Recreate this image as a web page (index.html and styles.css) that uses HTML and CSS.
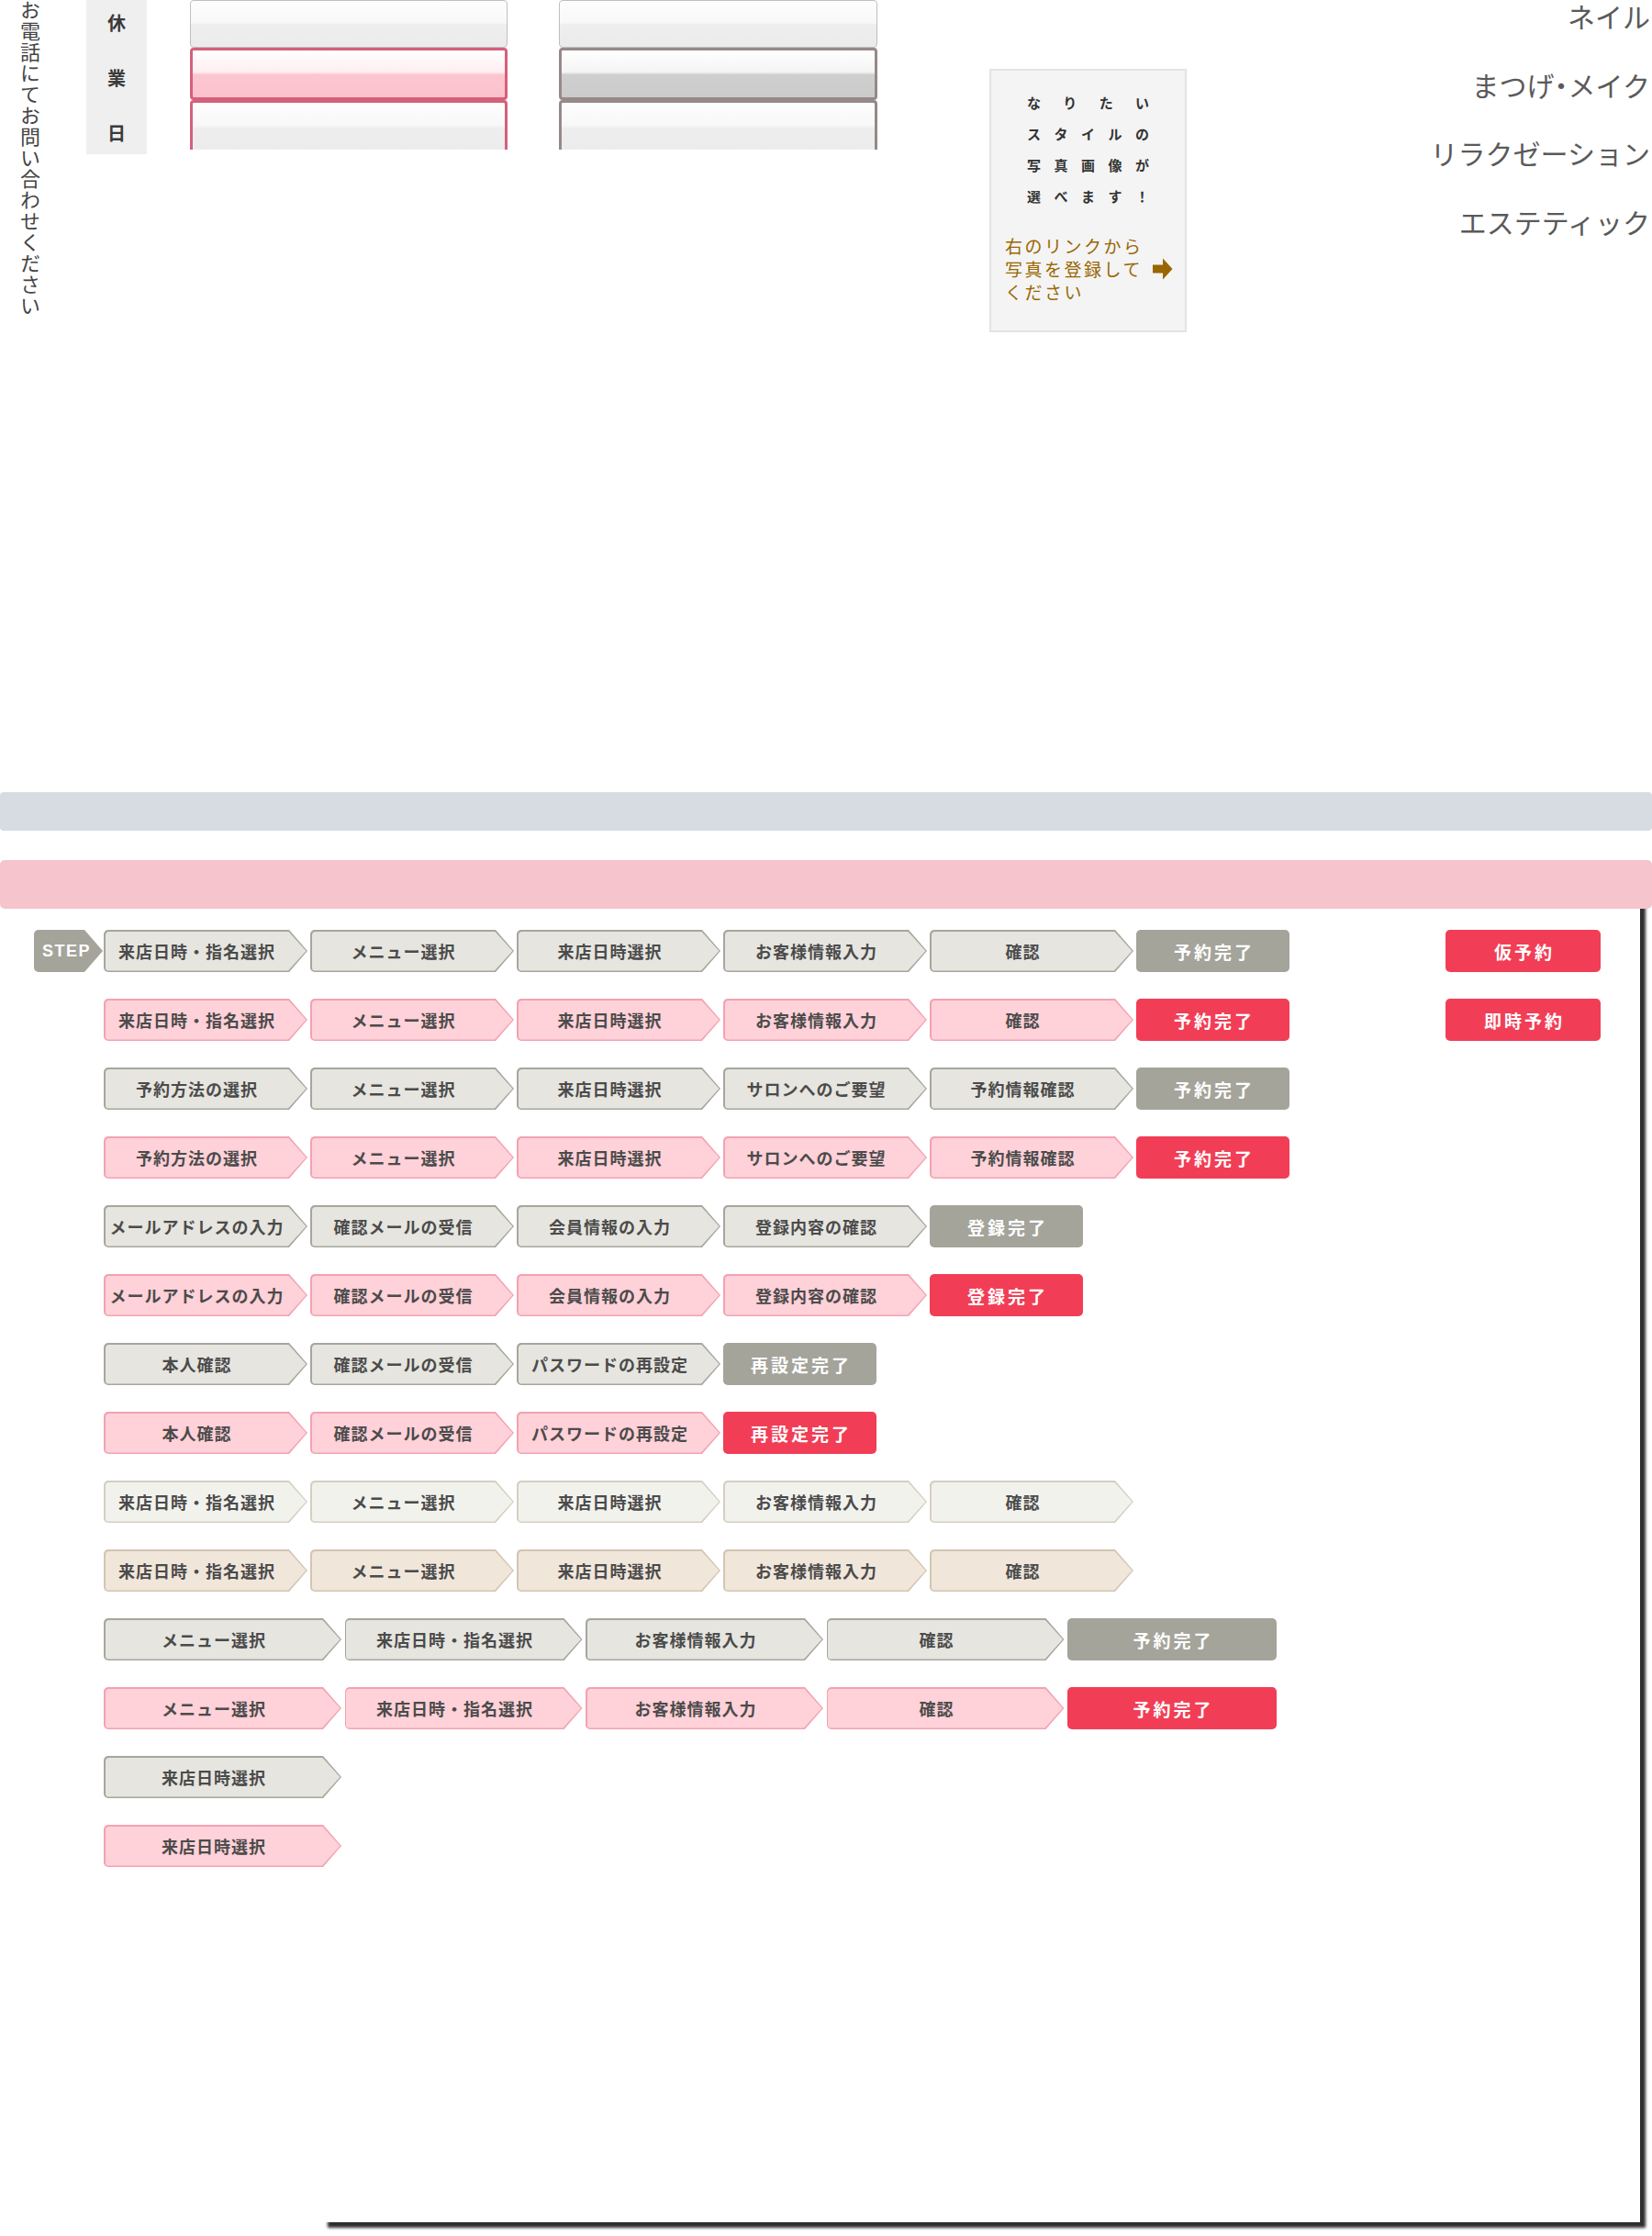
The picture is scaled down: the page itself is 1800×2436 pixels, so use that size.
FILE: index.html
```html
<!DOCTYPE html>
<html lang="ja">
<head>
<meta charset="utf-8">
<title>Parts</title>
<link rel="stylesheet" href="styles.css">
</head>
<body>
<div class="top">
  <div class="vtext">お電話にてお問い合わせください</div>
  <div class="label"><span>休</span><span>業</span><span>日</span></div>
  <div class="fcol pinkcol">
    <div class="fbox plain"></div>
    <div class="fbox sel"></div>
    <div class="fbox next"></div>
  </div>
  <div class="fcol browncol">
    <div class="fbox plain"></div>
    <div class="fbox sel"></div>
    <div class="fbox next"></div>
  </div>
  <div class="info">
    <div class="catch">
      <div><span>な</span><span>り</span><span>た</span><span>い</span></div>
      <div><span>ス</span><span>タ</span><span>イ</span><span>ル</span><span>の</span></div>
      <div><span>写</span><span>真</span><span>画</span><span>像</span><span>が</span></div>
      <div><span>選</span><span>べ</span><span>ま</span><span>す</span><span>！</span></div>
    </div>
    <div class="link">
      <p class="link-text">右のリンクから<br>写真を登録して<br>ください</p>
      <svg class="link-arrow" width="22" height="24" viewBox="0 0 22 24"><path d="M0 7.5H11V0.5L21.5 12L11 23.5V16.5H0Z" fill="#996600"/></svg>
    </div>
  </div>
  <ul class="menu">
    <li>ネイル</li>
    <li>まつげ<span class="dot">・</span>メイク</li>
    <li>リラクゼーション</li>
    <li>エステティック</li>
  </ul>
</div>

<div class="graybar"></div>

<div class="lower">
  <div class="panel"></div>
  <div class="lower-content">
    <div class="pinkbar"></div>
    <div class="steps">
      <div class="row g">
        <div class="badge">STEP</div>
        <div class="step"><span>来店日時・指名選択</span></div>
        <div class="step"><span>メニュー選択</span></div>
        <div class="step"><span>来店日時選択</span></div>
        <div class="step"><span>お客様情報入力</span></div>
        <div class="step"><span>確認</span></div>
        <div class="final">予約完了</div>
        <div class="rbtn">仮予約</div>
      </div>
      <div class="row p">
        <div class="step"><span>来店日時・指名選択</span></div>
        <div class="step"><span>メニュー選択</span></div>
        <div class="step"><span>来店日時選択</span></div>
        <div class="step"><span>お客様情報入力</span></div>
        <div class="step"><span>確認</span></div>
        <div class="final">予約完了</div>
        <div class="rbtn">即時予約</div>
      </div>
      <div class="row g">
        <div class="step"><span>予約方法の選択</span></div>
        <div class="step"><span>メニュー選択</span></div>
        <div class="step"><span>来店日時選択</span></div>
        <div class="step"><span>サロンへのご要望</span></div>
        <div class="step"><span>予約情報確認</span></div>
        <div class="final">予約完了</div>
      </div>
      <div class="row p">
        <div class="step"><span>予約方法の選択</span></div>
        <div class="step"><span>メニュー選択</span></div>
        <div class="step"><span>来店日時選択</span></div>
        <div class="step"><span>サロンへのご要望</span></div>
        <div class="step"><span>予約情報確認</span></div>
        <div class="final">予約完了</div>
      </div>
      <div class="row g">
        <div class="step"><span>メールアドレスの入力</span></div>
        <div class="step"><span>確認メールの受信</span></div>
        <div class="step"><span>会員情報の入力</span></div>
        <div class="step"><span>登録内容の確認</span></div>
        <div class="final">登録完了</div>
      </div>
      <div class="row p">
        <div class="step"><span>メールアドレスの入力</span></div>
        <div class="step"><span>確認メールの受信</span></div>
        <div class="step"><span>会員情報の入力</span></div>
        <div class="step"><span>登録内容の確認</span></div>
        <div class="final">登録完了</div>
      </div>
      <div class="row g">
        <div class="step"><span>本人確認</span></div>
        <div class="step"><span>確認メールの受信</span></div>
        <div class="step"><span>パスワードの再設定</span></div>
        <div class="final">再設定完了</div>
      </div>
      <div class="row p">
        <div class="step"><span>本人確認</span></div>
        <div class="step"><span>確認メールの受信</span></div>
        <div class="step"><span>パスワードの再設定</span></div>
        <div class="final">再設定完了</div>
      </div>
      <div class="row l">
        <div class="step"><span>来店日時・指名選択</span></div>
        <div class="step"><span>メニュー選択</span></div>
        <div class="step"><span>来店日時選択</span></div>
        <div class="step"><span>お客様情報入力</span></div>
        <div class="step"><span>確認</span></div>
      </div>
      <div class="row b">
        <div class="step"><span>来店日時・指名選択</span></div>
        <div class="step"><span>メニュー選択</span></div>
        <div class="step"><span>来店日時選択</span></div>
        <div class="step"><span>お客様情報入力</span></div>
        <div class="step"><span>確認</span></div>
      </div>
      <div class="row g wide">
        <div class="step"><span>メニュー選択</span></div>
        <div class="step"><span>来店日時・指名選択</span></div>
        <div class="step"><span>お客様情報入力</span></div>
        <div class="step"><span>確認</span></div>
        <div class="final">予約完了</div>
      </div>
      <div class="row p wide">
        <div class="step"><span>メニュー選択</span></div>
        <div class="step"><span>来店日時・指名選択</span></div>
        <div class="step"><span>お客様情報入力</span></div>
        <div class="step"><span>確認</span></div>
        <div class="final">予約完了</div>
      </div>
      <div class="row g wide">
        <div class="step"><span>来店日時選択</span></div>
      </div>
      <div class="row p wide">
        <div class="step"><span>来店日時選択</span></div>
      </div>
    </div>
  </div>
</div>
</body>
</html>
```

FILE: styles.css
```css
html, body {
  margin: 0;
  padding: 0;
  background: #ffffff;
}
body {
  width: 1800px;
  height: 2436px;
  overflow: hidden;
  font-family: "Noto Sans CJK JP", "Noto Sans", sans-serif;
  color: #333;
}

/* ---------- top area ---------- */
.top {
  height: 863px;
  display: flex;
  align-items: flex-start;
}
.vtext {
  writing-mode: vertical-rl;
  margin-left: 22px;
  width: 22px;
  font-size: 22px;
  line-height: 22px;
  letter-spacing: 1px;
  color: #444;
}
.label {
  margin-left: 50px;
  width: 66px;
  height: 168px;
  box-sizing: border-box;
  background: #efefef;
  display: flex;
  flex-direction: column;
  align-items: center;
  padding-top: 14px;
  gap: 38px;
  font-weight: 700;
  font-size: 20px;
  line-height: 22px;
  color: #3a3a3a;
}
.fcol {
  width: 346px;
  height: 163px;
  overflow: hidden;
  flex: none;
}
.pinkcol { margin-left: 47px; --fb: #d5607b; --sel-top: #ffeef1; --sel-low: #fcc6d0; --sel-end: #fbc2cc; }
.browncol { margin-left: 56px; width: 347px; --fb: #978989; --sel-top: #f4f4f4; --sel-low: #cfcfcf; --sel-end: #cbcbcb; }
.fbox {
  box-sizing: border-box;
  border-radius: 4px;
}
.fbox.plain {
  height: 52px;
  border: 1px solid #bfbfbf;
  background: linear-gradient(#fdfdfd 0%, #f8f8f8 48%, #eeeeee 52%, #ebebeb 100%);
}
.fbox.sel {
  height: 57px;
  border: 3px solid var(--fb);
  background: linear-gradient(#ffffff 0%, var(--sel-top) 46%, var(--sel-low) 52%, var(--sel-end) 100%);
}
.fbox.next {
  height: 64px;
  border: 3px solid var(--fb);
  border-bottom: none;
  background: linear-gradient(#fdfdfd 0%, #f8f8f8 40%, #eeeeee 46%, #ebebeb 100%);
}

.info {
  margin-left: 122px;
  margin-top: 75px;
  width: 215px;
  height: 287px;
  box-sizing: border-box;
  border: 2px solid #e3e3e3;
  background: #f4f4f4;
  flex: none;
}
.catch {
  margin: 18px 0 0 39px;
  width: 133px;
}
.catch div {
  display: flex;
  justify-content: space-between;
  height: 34px;
  line-height: 34px;
  font-weight: 700;
  font-size: 15px;
  color: #333;
}
.link {
  display: flex;
  align-items: center;
  margin: 24px 0 0 15px;
}
.link-text {
  margin: 0;
  white-space: nowrap;
  font-size: 19px;
  line-height: 25px;
  letter-spacing: 2.5px;
  color: #996600;
}
.link-arrow {
  margin-left: 10px;
  flex: none;
}

.menu {
  list-style: none;
  margin: 0 2px 0 auto;
  padding: 0;
  display: flex;
  flex-direction: column;
  align-items: flex-end;
  gap: 40.5px;
  font-size: 30px;
  line-height: 34px;
  color: #5a5a5a;
}
.menu .dot {
  font-feature-settings: "halt";
}

/* ---------- bars ---------- */
.graybar {
  height: 42px;
  background: #d7dce3;
  border-radius: 4px;
}
.lower {
  display: grid;
  margin-top: 32px;
}
.lower > * {
  grid-area: 1 / 1;
}
.panel {
  margin-left: 351px;
  margin-top: 20px;
  width: 1436px;
  height: 1464px;
  background: #ffffff;
  box-shadow: 6px 6px 3px rgba(0, 0, 0, 0.82);
}
.pinkbar {
  height: 53px;
  background: #f5c4cd;
  border-radius: 5px;
}
.steps {
  padding-top: 23px;
}

/* ---------- step rows ---------- */
.row {
  display: flex;
  gap: 3px;
  height: 46px;
  margin-bottom: 29px;
  padding-left: 113px;
  padding-right: 56px;
}
.row.g { --bd: #a6a69e; --bg: #e6e5df; --fin: #a4a49b; }
.row.p { --bd: #f2a2b2; --bg: #ffd1d8; --fin: #f13e56; }
.row.l { --bd: #d5cfc1; --bg: #f2f2ed; --fin: #a4a49b; }
.row.b { --bd: #d3c5b1; --bg: #f1e6da; --fin: #a4a49b; }

.step {
  width: 222px;
  flex: none;
  box-sizing: border-box;
  padding: 1.5px;
  border-radius: 5px;
  background: var(--bd);
  clip-path: polygon(0 0, calc(100% - 20px) 0, 100% 50%, calc(100% - 20px) 100%, 0 100%);
}
.step span {
  display: flex;
  align-items: center;
  justify-content: center;
  height: 100%;
  box-sizing: border-box;
  padding-right: 19px;
  border-radius: 4px;
  background: var(--bg);
  clip-path: polygon(0 0, calc(100% - 19.5px) 0, 100% 50%, calc(100% - 19.5px) 100%, 0 100%);
  font-size: 18px;
  font-weight: 700;
  letter-spacing: 1px;
  color: #4b4b4b;
  white-space: nowrap;
}
.row.wide { gap: 3.5px; }
.row.wide .step { width: 259px; }

.final {
  width: 167px;
  flex: none;
  border-radius: 5px;
  background: var(--fin);
  display: flex;
  align-items: center;
  justify-content: center;
  padding-left: 3px;
  box-sizing: border-box;
  color: #ffffff;
  font-size: 19px;
  font-weight: 700;
  letter-spacing: 3px;
}
.row.wide .final { width: 228px; }

.rbtn {
  margin-left: auto;
  width: 169px;
  flex: none;
  border-radius: 5px;
  background: #f13e56;
  display: flex;
  align-items: center;
  justify-content: center;
  padding-left: 3px;
  box-sizing: border-box;
  color: #ffffff;
  font-size: 19px;
  font-weight: 700;
  letter-spacing: 3px;
}

.badge {
  width: 75px;
  flex: none;
  margin-left: -76px;
  margin-right: -2px;
  border-radius: 5px;
  background: #a4a49b;
  clip-path: polygon(0 0, calc(100% - 20px) 0, 100% 50%, calc(100% - 20px) 100%, 0 100%);
  display: flex;
  align-items: center;
  padding-left: 9px;
  box-sizing: border-box;
  color: #ffffff;
  font-family: "Liberation Sans", Arial, sans-serif;
  font-weight: 700;
  font-size: 18px;
  letter-spacing: 1.5px;
}
```
